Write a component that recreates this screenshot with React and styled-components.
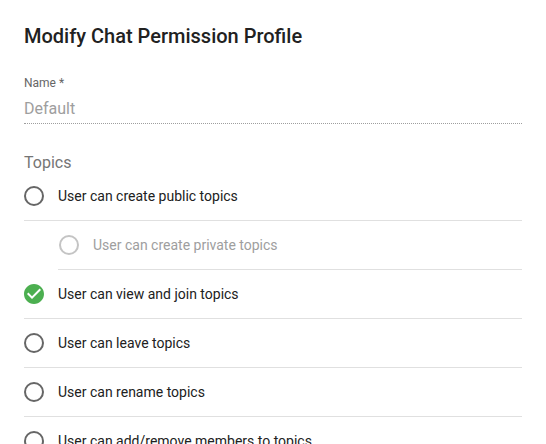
import React from "react";
import styled, { createGlobalStyle } from "styled-components";

const Global = createGlobalStyle`
  html, body { margin: 0; padding: 0; background: #fff; }
  body { font-family: Roboto, "Noto Sans", Arial, sans-serif; -webkit-font-smoothing: antialiased; }
`;

const Page = styled.div`
  padding: 24px 24px 0 24px;
  box-sizing: border-box;
  width: 546px;
  height: 444px;
  overflow: hidden;
`;

const Title = styled.h2`
  margin: 0;
  font-size: 20px;
  line-height: 24px;
  font-weight: 500;
  color: #212121;
`;

const Field = styled.div`
  margin-top: 27px;
  display: flex;
  flex-direction: column;
`;

const Label = styled.label`
  font-size: 12px;
  line-height: 16px;
  color: #666;
`;

const Input = styled.div`
  margin-top: 8px;
  font-size: 16px;
  line-height: 20px;
  color: #9e9e9e;
  padding-bottom: 4px;
  border-bottom: 1px dotted #9e9e9e;
`;

const SectionLabel = styled.div`
  margin-top: 30px;
  font-size: 16px;
  line-height: 18px;
  color: #757575;
`;

const List = styled.div`
  display: flex;
  flex-direction: column;
`;

const Row = styled.div`
  display: flex;
  align-items: center;
  gap: 14px;
  height: 48px;
  border-bottom: 1px solid #e0e0e0;
  margin-left: ${(p) => (p.$indent ? "34px" : "0")};
  padding-left: ${(p) => (p.$indent ? "1px" : "0")};
  font-size: 14px;
  color: ${(p) => (p.$disabled ? "#9e9e9e" : "#212121")};
`;

const Icon = styled.svg`
  width: 20px;
  height: 20px;
  flex: none;
`;

function Radio({ checked, disabled }) {
  if (checked) {
    return (
      <Icon viewBox="2 2 20 20">
        <path
          fill="#4caf50"
          d="M12 2C6.48 2 2 6.48 2 12s4.48 10 10 10 10-4.48 10-10S17.52 2 12 2zm-2 15l-5-5 1.41-1.41L10 14.17l7.59-7.59L19 8l-9 9z"
        />
      </Icon>
    );
  }
  return (
    <Icon viewBox="2 2 20 20">
      <circle
        cx="12"
        cy="12"
        r="9"
        fill="none"
        stroke={disabled ? "#c4c4c4" : "#666"}
        strokeWidth="2"
      />
    </Icon>
  );
}

const items = [
  { label: "User can create public topics" },
  { label: "User can create private topics", indent: true, disabled: true },
  { label: "User can view and join topics", checked: true },
  { label: "User can leave topics" },
  { label: "User can rename topics" },
  { label: "User can add/remove members to topics" },
];

export default function App() {
  return (
    <>
      <Global />
      <Page>
        <Title>Modify Chat Permission Profile</Title>
        <Field>
          <Label>Name *</Label>
          <Input>Default</Input>
        </Field>
        <SectionLabel>Topics</SectionLabel>
        <List>
          {items.map((it) => (
            <Row key={it.label} $indent={it.indent} $disabled={it.disabled}>
              <Radio checked={it.checked} disabled={it.disabled} />
              <span>{it.label}</span>
            </Row>
          ))}
        </List>
      </Page>
    </>
  );
}
